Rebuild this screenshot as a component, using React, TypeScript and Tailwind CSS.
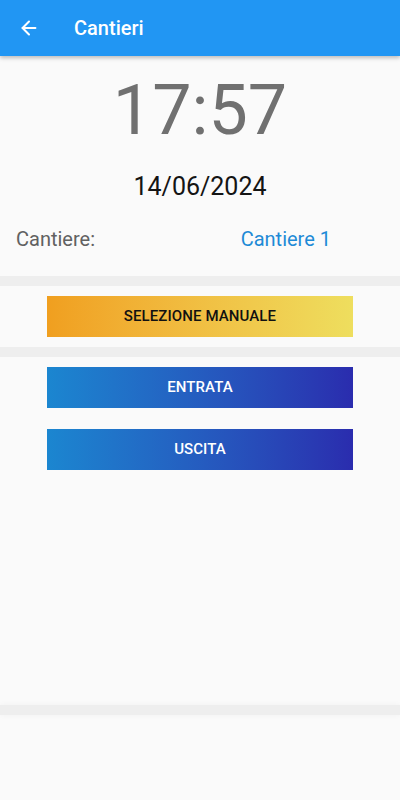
import { ArrowLeft } from "lucide-react";

function GradientButton({ label, variant }: { label: string; variant: "manual" | "blue" }) {
  const colors =
    variant === "manual"
      ? "bg-gradient-to-r from-[#f09f1f] to-[#eede5e] text-[#111]"
      : "bg-gradient-to-r from-[#1b86d0] to-[#2a2cae] text-white";

  return (
    <button
      className={`mx-[47px] flex h-[41px] items-center justify-center text-[15px] font-medium tracking-[0.1px] ${colors}`}
    >
      {label}
    </button>
  );
}

export default function App() {
  return (
    <div className="flex min-h-[800px] w-[400px] flex-col bg-[#fafafa] font-['Roboto',sans-serif]">
      <header className="relative z-10 flex h-14 items-center bg-[#2196f3] px-4 shadow-[0_2px_4px_rgba(0,0,0,0.25)]">
        <ArrowLeft className="ml-[2px] h-[22px] w-[22px] text-white" strokeWidth={2.2} />
        <h1 className="ml-[34px] text-[20px] font-medium text-white">Cantieri</h1>
      </header>

      <div className="pt-[12px] text-center text-[70px] leading-[84px] text-[#707070]">17:57</div>
      <div className="mt-[20px] text-center text-[25px] leading-[29px] text-[#141414]">14/06/2024</div>

      <div className="mt-[26px] flex items-center px-4 text-[20px] leading-[24px]">
        <span className="text-[#616161]">Cantiere:</span>
        <span className="ml-auto mr-[53px] text-[#1e8ad6]">Cantiere 1</span>
      </div>

      <div className="mt-[25px] h-[10px] bg-[#eeeeee]" />

      <div className="flex flex-col py-[10px]">
        <GradientButton label="SELEZIONE MANUALE" variant="manual" />
      </div>

      <div className="h-[10px] bg-[#eeeeee]" />

      <div className="flex flex-col gap-[21px] pt-[10px]">
        <GradientButton label="ENTRATA" variant="blue" />
        <GradientButton label="USCITA" variant="blue" />
      </div>

      <div className="mt-[235px] h-[10px] bg-[#eeeeee] shadow-[0_0_6px_rgba(0,0,0,0.04)]" />
      <div className="flex-1" />
    </div>
  );
}
